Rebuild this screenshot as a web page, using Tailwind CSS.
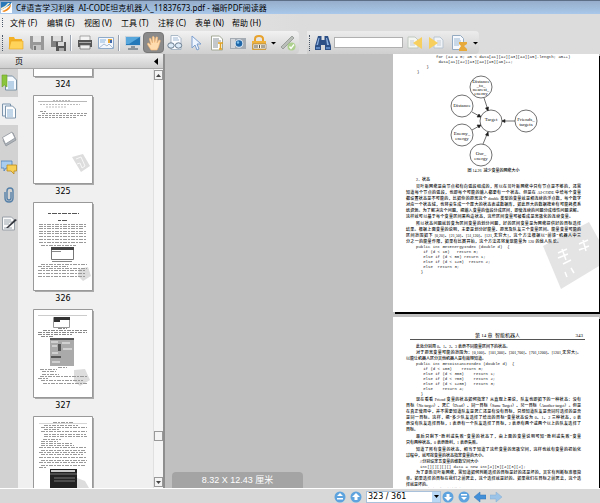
<!doctype html>
<html lang="zh-CN">
    <head>
        <meta charset="UTF-8" />
        <meta name="viewport" content="width=device-width, initial-scale=1.0" />
        <title>福昕PDF阅读器</title>
        <!-- Add Tailwind -->
        <script src="https://cdn.jsdelivr.net/npm/@tailwindcss/browser@4"></script>
    </head>
    <body class="h-screen flex flex-col overflow-hidden bg-[#dcdcdc] text-black text-[8px] font-['Noto_Sans','Noto_Sans_CJK_SC',sans-serif]">
        <!-- Title bar -->
        <header class="h-[14px] shrink-0 flex items-center gap-1 px-px border-t border-[#5d6f86] bg-linear-to-b from-[#96aecb] to-[#a9c8ea]">
            <svg class="w-[11px] h-[11px]" viewBox="0 0 11 11">
                <path d="M0 0h11v11H0z" fill="#fff"/>
                <path d="M0 0h11L9 3 0 8z" fill="#2a78b8"/>
                <path d="M1 9Q6 8 10 2Q10 8 3 10z" fill="#f08a1c"/>
                <path d="M0 8Q5 6 9 1L7 1Q4 5 0 6z" fill="#fff4d0"/>
            </svg>
            <h1 class="whitespace-pre leading-none">C#语言学习利器  AI-CODE坦克机器人_11837673.pdf - 福昕PDF阅读器</h1>
        </header>

        <!-- Menu -->
        <nav class="h-[17px] shrink-0 flex items-center pl-[2px] bg-linear-to-r from-[#f0f0f0] to-[#dcdcdc] to-50%">
            <span class="h-[9px] border-l border-dotted border-gray-600 mr-[7px]"></span>
            <div class="flex gap-[9px] leading-none [&>button]:w-7 [&>button]:whitespace-nowrap [&>button]:text-left">
                <button>文件 (F)</button>
                <button>编辑 (E)</button>
                <button>视图 (V)</button>
                <button>工具 (T)</button>
                <button>注释 (C)</button>
                <button>表单 (N)</button>
                <button>帮助 (H)</button>
            </div>
        </nav>

        <!-- Toolbars -->
        <div class="h-[23px] shrink-0 flex gap-2 [&_button]:shrink-0 [&_svg]:block [&_svg]:mx-auto">
            <div class="flex items-center pl-[2px] pr-px rounded-r bg-linear-to-b from-[#f2f2f2] to-[#cfcfcf]">
                <span class="h-4 border-l border-dotted border-gray-600 mr-[2px]"></span>
                <button class="w-[21px]" aria-label="打开">
                    <svg width="16" height="16" viewBox="0 0 16 16"><path d="M1 2h5l1 2h7v10H1z" fill="#f2b126"/><path d="M1 14L3 6h12v8z" fill="#ffd35a" stroke="#e8a21d" stroke-width=".6"/></svg>
                </button>
                <button class="w-[21px]" aria-label="保存">
                    <svg width="16" height="16" viewBox="0 0 16 16"><path d="M1 1h14v14H3l-2-2z" fill="#989898"/><path d="M4 1h8v6H4z" fill="#e2e2e2"/><path d="M4 10h8v5H4z" fill="#c4c4c4"/><path d="M5 11h2v4H5z" fill="#777"/></svg>
                </button>
                <button class="w-[21px]" aria-label="另存为">
                    <svg width="16" height="16" viewBox="0 0 16 16"><path d="M1 1h12v11H1z" fill="#808080"/><path d="M3 1h8v5H3z" fill="#ddd"/><path d="M6 7h10v9H6z" fill="#555"/><path d="M8 7h6v4H8z" fill="#d8d8d8"/><path d="M9 13h5v3H9z" fill="#aaa"/></svg>
                </button>
                <span class="w-px h-4 mx-[2px] bg-gray-50 border-l border-gray-400 box-content"></span>
                <button class="w-[21px]" aria-label="打印">
                    <svg width="16" height="16" viewBox="0 0 16 16"><path d="M3 1h10v5H3z" fill="#f4f4f4" stroke="#888" stroke-width=".7"/><path d="M1 5h14v7H1z" fill="#555"/><path d="M2 7h12v1H2z" fill="#aaa"/><path d="M3 10h10v4H3z" fill="#eee" stroke="#666" stroke-width=".7"/></svg>
                </button>
                <button class="w-[21px]" aria-label="邮件">
                    <svg width="16" height="16" viewBox="0 0 16 16"><path d="M.5 2.500h15v11H.5z" fill="#f4f8fc" stroke="#8fa9c8"/><path d="M2 5h6M2 7h5" stroke="#8ab4dc"/><path d="M10 4h4v4h-4z" fill="#e7a736"/><path d="M12 5h2v3h-2z" fill="#4168a8"/><path d="M1 13l5-4 3 2 2-2 4 4" fill="none" stroke="#a8bcd4"/></svg>
                </button>
                <span class="w-px h-4 mx-[2px] bg-gray-50 border-l border-gray-400 box-content"></span>
                <button class="w-[21px]" aria-label="全屏">
                    <svg width="16" height="16" viewBox="0 0 16 16"><path d="M0 1h16v10H0z" fill="#c9d3dc"/><path d="M1 2h14v8H1z" fill="#2579b8"/><path d="M1 2h14L4 9H1z" fill="#58a7dc"/><path d="M6 11h4v2h3v2H3v-2h3z" fill="#8d959c"/></svg>
                </button>
                <button class="w-[21px] h-[21px] rounded-sm bg-[#8a8a8a] border border-[#777]" aria-label="手形工具">
                    <svg width="16" height="16" viewBox="0 0 16 16"><path d="M5 15L1.500 9.500Q1 8 2.500 8L5 10 3.300 4Q3.500 2.600 4.800 3.500L6.500 8 6.300 2Q7.200.5 8.200 2L8.700 7.500 10 2.300Q11 1.300 11.700 2.500L11 8 13 5Q14.300 4.500 14.300 6L12.500 12 11 15z" fill="#ffdcae" stroke="#f3b673" stroke-width=".6"/></svg>
                </button>
                <button class="w-[21px]" aria-label="阅读">
                    <svg width="16" height="16" viewBox="0 0 16 16"><path d="M4 .5h7l3 3v11H4z" fill="#fafcff" stroke="#9ab" stroke-width=".8"/><path d="M6 3h5M6 5h6" stroke="#9fb8d2"/><ellipse cx="4" cy="10.500" rx="3.200" ry="2.700" fill="#dbeaf6" stroke="#6a7b8e"/><ellipse cx="11.500" cy="10.500" rx="3.200" ry="2.700" fill="#dbeaf6" stroke="#6a7b8e"/></svg>
                </button>
                <button class="w-[21px]" aria-label="选择">
                    <svg width="16" height="16" viewBox="0 0 16 16"><path d="M4 1v12l3-3 2 5 2-1-2-5h4z" fill="#eef5ff" stroke="#7d9fcd"/></svg>
                </button>
                <button class="w-[21px]" aria-label="选择文本">
                    <svg width="16" height="16" viewBox="0 0 16 16"><path d="M2.500 1h8l3 3v11h-11z" fill="#fff" stroke="#a2a894"/><path d="M4 4h6M4 6h8M4 8h5M4 10h5M4 12h5" stroke="#8a9094"/><path d="M9 8h5M11.500 8v6M10 14h3" stroke="#e0a020" stroke-width="1.500"/></svg>
                </button>
                <button class="w-[21px]" aria-label="快照">
                    <svg width="16" height="16" viewBox="0 0 16 16"><path d="M0 3h16v11H0z" fill="#a5abb3"/><path d="M1 4h4v9H1z" fill="#d3d7db"/><circle cx="9" cy="8.500" r="4.300" fill="#dfeaf4"/><circle cx="9" cy="8.500" r="3.300" fill="#1e66a8"/><circle cx="8" cy="7.500" r="1.200" fill="#7cc0ee"/></svg>
                </button>
                <button class="w-[21px]" aria-label="打字机">
                    <svg width="16" height="16" viewBox="0 0 16 16"><path d="M4 7V4q0-3 4-3t4 3v3" fill="none" stroke="#e6a22c" stroke-width="2"/><path d="M1 6h14v9H1z" fill="#f1b23a"/><path d="M2 9h13v5H2z" fill="#fff5dd" stroke="#80705a" stroke-width=".6"/><path d="M4 10v3M6 10v3M8.500 10v3M11 10v3M13 10v3" stroke="#555"/></svg>
                </button>
                <svg class="w-2" height="6" viewBox="0 0 8 6"><path d="M2 2h5L4.500 4.500z"/></svg>
                <button class="w-[21px]" aria-label="签名">
                    <svg width="16" height="16" viewBox="0 0 16 16"><path d="M1 12L12 1l2 2L3 14z" fill="#b9beb9" stroke="#858a85" stroke-width=".7"/><circle cx="11.500" cy="11.500" r="4" fill="#aed08e"/><path d="M9.500 11.500l1.500 2 3-4" fill="none" stroke="#fff" stroke-width="1.300"/></svg>
                </button>
            </div>

            <div class="flex items-center pl-[2px] rounded-r bg-linear-to-b from-[#ececec] to-[#cfcfcf]">
                <span class="h-4 border-l border-dotted border-gray-600 mr-[2px]"></span>
                <button class="w-[21px]" aria-label="查找">
                    <svg width="16" height="16" viewBox="0 0 16 16"><path d="M3 1h3.500v4h3V1H13l3 10v4h-6v-5H6v5H0v-4z" fill="#2c4f86"/><path d="M3.500 3h1L3 10H1.500zM11 3h1l2 7h-2z" fill="#8eb2e0"/><path d="M1 12h4v2H1zM11 12h4v2h-4z" fill="#5c86c0"/></svg>
                </button>
                <input type="text" aria-label="查找内容" class="w-[69px] h-[11px] mx-px bg-white border border-[#b0b0b0]">
                <button class="w-[21px]" aria-label="上一个">
                    <svg width="16" height="16" viewBox="0 0 16 16"><path d="M1 2h7l3 3v8H1z" fill="#f4f6f2" stroke="#c0c8c0"/><path d="M3 6h4M3 8h4M3 10h5" stroke="#c3cbd3"/><path d="M15 2v12L6 8z" fill="#f7cf5e"/></svg>
                </button>
                <button class="w-[21px]" aria-label="下一个">
                    <svg width="16" height="16" viewBox="0 0 16 16"><path d="M6 2h6l3 3v8H6z" fill="#f0f4f8" stroke="#b8c4d0"/><path d="M9 6h4M9 8h4M9 10h4" stroke="#c3cbd3"/><path d="M1 2v12l9-6z" fill="#f7cf5e"/></svg>
                </button>
                <button class="w-[25px]" aria-label="高级查找">
                    <svg width="16" height="16" viewBox="0 0 16 16"><path d="M1.500.5h8l3 3v11h-11z" fill="#f6faff" stroke="#94aac0"/><path d="M3 4h6M3 6h7M3 8h6M3 10h5" stroke="#9bb6d0"/><path d="M8 7h8v2l-3 2 3 3v2H8v-2l2-3-2-2z" fill="#e7a93a"/></svg>
                </button>
                <svg class="w-2" height="6" viewBox="0 0 8 6"><path d="M2 2h5L4.500 4.500z"/></svg>
            </div>
        </div>

        <main class="flex-1 min-h-0 flex">
            <!-- Page thumbnails -->
            <aside class="w-[165px] shrink-0 flex flex-col border-r-2 border-[#8e8e8e] bg-[#f0f0f0]">
                <div class="h-[15px] shrink-0 flex items-center justify-between pl-[15px] pr-1 border-b border-[#a8a8a8] bg-linear-to-b from-[#eee] to-[#cdcdcd]">
                    <h2 class="leading-none">页</h2>
                    <button aria-label="隐藏面板"><svg class="w-[5px] h-[7px]" viewBox="0 0 5 7"><path d="M4 0v7L0 3.500z"/></svg></button>
                </div>
                <div class="flex-1 min-h-0 flex">
                    <div class="w-[18px] shrink-0 flex flex-col bg-[#d2d2d2] [&>button]:h-7 [&_svg]:block [&_svg]:mx-auto">
                        <button aria-label="书签">
                            <svg width="16" height="18" viewBox="0 0 16 18"><path d="M4.500 2h7l4 4v10h-11z" fill="#f4faff" stroke="#7890a4"/><path d="M7 8h6M7 10h6M7 12h6M7 14h6" stroke="#7ea9cf"/><path d="M1 1h5v12l-2.500-2L1 13z" fill="#8bc53d" stroke="#6ba326" stroke-width=".6"/></svg>
                        </button>
                        <button class="bg-[#f0f0f0]" aria-label="页面">
                            <svg width="16" height="18" viewBox="0 0 16 18"><path d="M1.500 2h8v12h-8z" fill="#eef4fa" stroke="#7d95ab"/><path d="M4.500 4h7l3 3v9h-10z" fill="#fff" stroke="#7d95ab"/><path d="M6 8h6M6 10h6M6 12h6M6 14h6" stroke="#86aed3"/></svg>
                        </button>
                        <button aria-label="图层">
                            <svg width="16" height="18" viewBox="0 0 16 18"><path d="M2 10L12 3l3 7L5 16z" fill="#aeb4ba" stroke="#858c94" stroke-width=".7"/><path d="M1.500 7.500L11 2l3 6-9.500 6z" fill="#fff" stroke="#8b9299" stroke-width=".8"/></svg>
                        </button>
                        <button aria-label="注释">
                            <svg width="16" height="18" viewBox="0 0 16 18"><path d="M0 3h11v7H5l-2 3v-3H0z" fill="#a9cdef" stroke="#4e82b8" stroke-width=".8"/><path d="M6 7h9.500v6H13v3l-3-3H6z" fill="#f8cf55" stroke="#b98a1c" stroke-width=".8"/></svg>
                        </button>
                        <button aria-label="附件">
                            <svg width="16" height="18" viewBox="0 0 16 18"><path d="M4 6v6q0 4 4 4t4-4V5q0-3-3-3T6 5v7q0 2 2 2t2-2V6" fill="none" stroke="#5680a8" stroke-width="1.400"/></svg>
                        </button>
                        <button aria-label="签名面板">
                            <svg width="16" height="18" viewBox="0 0 16 18"><path d="M1.500 3h9l3 3v10h-12z" fill="#fafafa" stroke="#98a0a8"/><path d="M3 6h7M3 8h8M3 10h5M3 14h8" stroke="#9ba5ae"/><path d="M5 14L14 5l2 1-9 8z" fill="#34383e"/></svg>
                        </button>
                    </div>

                    <ol class="flex-1 flex flex-col overflow-hidden items-center text-center text-[8px] [&>li]:w-[90px] [&>li]:h-[107px] [&>li]:shrink-0 [&>li]:mr-[45px] [&_svg]:w-[61px] [&_svg]:h-[90px] [&_svg]:mx-auto [&_p]:h-[17px] [&_p]:leading-[13px] [&_p]:font-['DejaVu_Sans']">
                        <!-- scrolled so that page 324 is nearly out of view -->
                        <li class="-mt-[81px]">
                            <svg viewBox="0 0 61 90"><path d="M2 2h59v88H2z" fill="#aaa"/><path d="M.5.5h59v88H.5z" fill="#fff" stroke="#999"/></svg>
                            <p>324</p>
                        </li>
                        <li>
                            <svg viewBox="0 0 61 90"><path d="M2 2h59v88H2z" fill="#aaa"/><path d="M.5.5h59v88H.5z" fill="#fff" stroke="#999"/>
                                <path d="M5 6.500h49" stroke="#888" stroke-width=".6"/><path d="M20 5.500h18M7 9.500h40M13 12h20" stroke="#bbb" stroke-dasharray="2 1"/>
                                <path d="M7 16.500h7M9 18.500h45M5 20.500h48M5 22.500h38" stroke="#999" stroke-dasharray="3 1 2 1"/>
                                <path d="M39 62l11-3 7 12-9 6z" fill="#ddd"/><path d="M43 64l5-2 4 9-3 2-2-5-3 1" fill="none" stroke="#f8f8f8"/>
                            </svg>
                            <p>325</p>
                        </li>
                        <li>
                            <svg viewBox="0 0 61 90"><path d="M2 2h59v88H2z" fill="#aaa"/><path d="M.5.5h59v88H.5z" fill="#fff" stroke="#999"/>
                                <path d="M15 11.500h31M25 18.500h10" stroke="#555" stroke-dasharray="3 1 5 1"/>
                                <path d="M6 22.500h48M6 24.500h48M6 26.500h45M6 29.500h48M6 31.500h48M6 34.500h48M6 37.500h48M6 40.500h48M8 43.500h35" stroke="#999" stroke-dasharray="4 1 2 1"/>
                                <path d="M18.500 45.500h22v12h-22z" fill="#fff" stroke="#777"/><path d="M18 45h23v3H18z" fill="#444"/><path d="M19 49.500h9M19 59.500h20" stroke="#888"/>
                                <path d="M46 67l9-2 3 9-8 5-5-5z" fill="#ddd"/>
                                <path d="M8 62.500h46M5 64.500h30M8 66.500h46M5 68.500h48M5 71.500h48M5 74.500h48" stroke="#999" stroke-dasharray="4 1 2 1"/>
                            </svg>
                            <p>326</p>
                        </li>
                        <li>
                            <svg viewBox="0 0 61 90"><path d="M2 2h59v88H2z" fill="#aaa"/><path d="M.5.5h59v88H.5z" fill="#fff" stroke="#999"/>
                                <path d="M5 6.500h49" stroke="#aaa" stroke-width=".6"/><path d="M20.500 8.500h16v10h-16z" fill="#fff" stroke="#999"/><path d="M21 8h16v3H27v2h-6z" fill="#333"/>
                                <path d="M25 19.500h9M10 21.500h44M5 23.500h49M5 25.500h34M8 27.500h12" stroke="#888" stroke-dasharray="4 1 2 1"/>
                                <path d="M17 29h24v28H17z" fill="#aaa"/><path d="M17 29h24v2H17zM18 47h10v2H18zM25 35h3v7h-3z" fill="#555"/><path d="M18 33h7M29 34h8M19 37h5M30 40h9M19 44h6M19 53h8" stroke="#ddd" stroke-width="1.500"/>
                                <path d="M41 61l11-1 5 11-10 6-6-5z" fill="#ddd"/>
                                <path d="M25 58.500h9M7 60.500h17M9 62.500h14M9 65.500h17M7 67.500h47M5 69.500h10M8 71.500h42M10 74.500h44" stroke="#999" stroke-dasharray="4 1 2 1"/>
                            </svg>
                            <p>327</p>
                        </li>
                        <li>
                            <svg viewBox="0 0 61 90"><path d="M2 2h59v88H2z" fill="#aaa"/><path d="M.5.5h59v88H.5z" fill="#fff" stroke="#999"/>
                                <path d="M6 7.500h48" stroke="#bbb" stroke-width=".6"/>
                                <path d="M20 6.500h20M11 9.500h34M8 11.500h46M11 13.500h16M8 15.500h46M11 18.500h42M11 20.500h43M10 23.500h18M8 25.500h17M8 27.500h32M8 29.500h33M6 31.500h48M8 34.500h45M6 36.500h48M8 38.500h42M6 41.500h48M8 44.500h46M6 46.500h48M8 49.500h45M6 51.500h7" stroke="#999" stroke-dasharray="4 1 2 1"/>
                                <path d="M17 53h27v37H17z" fill="#222"/><path d="M18 54h24v2H18z" fill="#ccc"/><path d="M17 58h27M21 62h21M21 65h21" stroke="#777"/><path d="M44 62l8 3 4 7-5 6-7 2z" fill="#ddd"/>
                            </svg>
                        </li>
                    </ol>

                    <!-- Scrollbar -->
                    <div class="w-[10px] shrink-0 flex flex-col items-center py-px border-l border-[#e0e0e0] bg-[#f5f5f5] [&>button]:w-[9px] [&>button]:h-[10px] [&>button]:border [&>button]:border-[#999] [&>button]:bg-[#f4f4f4] [&_svg]:mx-auto">
                        <button aria-label="向上滚动"><svg width="5" height="3" viewBox="0 0 5 3"><path d="M0 3h5L2.500 0z" fill="#444"/></svg></button>
                        <span class="flex-1"></span>
                        <button aria-label="滚动块"></button>
                        <span class="h-9"></span>
                        <button aria-label="向下滚动"><svg width="5" height="3" viewBox="0 0 5 3"><path d="M0 0h5L2.500 3z" fill="#444"/></svg></button>
                    </div>
                </div>
            </aside>

            <!-- Document -->
            <section class="flex-1 min-w-0 relative flex flex-col items-end overflow-hidden bg-[#c0c0c0] text-[4px] text-black leading-[6px] font-['Liberation_Serif','Noto_Sans_CJK_SC',serif] [&_p]:whitespace-nowrap [&_p]:font-medium [&_pre]:font-['Liberation_Mono',monospace] [&_pre]:leading-[5px] [&_pre]:text-[#222] [&_.full]:[text-align-last:justify]">
                <article class="w-[206px] h-[258px] shrink-0 relative mr-px pl-[13px] pr-[18px] pt-px bg-white shadow-[2px_2px_0_#000]">
                    <svg class="absolute right-0 bottom-[22px] w-[56px] h-[68px]" viewBox="0 0 56 68">
                        <path d="M0 24L46 0l10 18v26L18 67z" fill="#e4e4e4"/>
                        <path d="M15 31l9-4M19 27l4 11M15 36l10-4M20 42l8-4M36 22l9-4M40 18l3 11M36 28l10-4M22 50l2 5M28 46l3 5" fill="none" stroke="#fff" stroke-width="1.500"/>
                    </svg>
                    <pre class="relative pl-[30px]">for (a4 = 0; a5 &lt; data[a1][a2][a3][a4][a5].length; a5++)
 data[a1][a2][a3][a4][a5][a6]++;</pre>
                    <pre class="pl-[11px]">    }
}</pre>
                    <svg class="block w-[180px] h-[92px]" viewBox="0 0 180 92" fill="none" stroke="#333" stroke-width=".7">
                        <circle cx="75" cy="12" r="11"/><circle cx="56" cy="31" r="11"/><circle cx="56" cy="60" r="11"/><circle cx="75" cy="80" r="11"/><circle cx="85" cy="46" r="11"/><circle cx="120" cy="46" r="11"/>
                        <path d="M78 23l4 12M66 37l9 5M66 55l9-5M77 69l5-12M109 46H96"/>
                        <path d="M82 36l-2.500-3 3-1zM75 42l-4 0 2-3zM75 50l-4 0 2 3zM82 57l-2.500 3 3 1zM96 46l3-1.500v3z" fill="#111"/>
                        <g fill="#111" stroke="none" font-size="5" text-anchor="middle">
                            <text x="75" y="8">Distance</text><text x="75" y="12">_to_</text><text x="75" y="16">nearest_</text><text x="75" y="20">enemy</text>
                            <text x="56" y="32">Distance</text><text x="85" y="46">Target</text>
                            <text x="56" y="60">Enemy_</text><text x="56" y="65">energy</text>
                            <text x="75" y="80">Our_</text><text x="75" y="85">energy</text>
                            <text x="120" y="46">Friends_</text><text x="120" y="51">targets</text>
                        </g>
                    </svg>
                    <p class="text-center mt-px">图 14.26&nbsp; 减少变量的网络大小</p>
                    <div class="relative mt-[3px]">
                        <p class="pl-[10px] mb-px">2．状态</p>
                        <p class="full pl-[10px]">贝叶斯网络是由节点和有向弧段组成的，所以在贝叶斯网络中只有节点是不够的，还需</p>
                        <p class="full">知道每个节点的弧段，也即每个可能的输入都要有一个状态。但是在 AI-CODE 中给每个变量</p>
                        <p class="full">都设置状态是不可能的，比如你的距离这个 double 类型的变量就是相连续的浮点数，每个数字</p>
                        <p class="full">对应一个状态域，也将会生成一个庞大的状态表或数据库，如此巨大的数据搜索有可能耗费系</p>
                        <p class="full">统资源。为了解决这个问题，把输入变量的值段分成区间，即使连续的问题分成线性问题求解。</p>
                        <p class="full pr-2">这样就可以基于每个变量区间来构造状态，这些区间变量可被看成是离散化的连续变量。</p>
                        <p class="full pl-[10px] mt-px">所以状态问题就转变为区间变量的划分问题，好的区间变量是为网络提供好的目标选择</p>
                        <p class="full">结果。根据上面变量的说明，主要是划分好能量、距离及队友三个变量区间。能量变量可能的</p>
                        <p class="full">区间范围如下 [0,20]、[21,50]、[51,120]、[121,无穷大]，这个方法根据以“前锋”机器人中三</p>
                        <p class="full pr-5">分之一的能量作限，如果有比赛开始，这个方法还将发现能量为 120 的敌人队长。</p>
                        <pre class="pl-[10px]">public int GetEnergyIndex (double d)  {
   if (d &lt; 10)   return 0;
   else if (d &lt; 50) return 1;
   else if (d &lt; 120)  return 2;
   else  return 3;
  }</pre>
                    </div>
                </article>

                <article class="w-[206px] shrink-0 mt-[5px] mr-px pl-[13px] pr-[18px] pt-[16px] bg-white shadow-[2px_2px_0_#000]">
                    <header class="grid grid-cols-3 ml-1 -mr-1 mb-1 px-[2px] border-b border-[#555] text-[5px]">
                        <span></span>
                        <h3 class="text-center whitespace-nowrap">第 14 章&nbsp; 智能机器人</h3>
                        <span class="text-right">343</span>
                    </header>
                    <p class="pl-[10px]">此处分别用 0、1、2、3 表示不同能量区间下的状态。</p>
                    <p class="full pl-[10px]">对于距离变量可能的范围为：[0,100]、[101,300]、[301,700]、[701,1200]、[1201,无穷大]。</p>
                    <p>以能让机器人区分其他机器人是有效得知道。</p>
                    <pre class="pl-[10px]">public int GetDistanceIndex (double d)  {
   if (d &lt; 100)    return 0;
   else if (d &lt; 300)    return 1;
   else if (d &lt; 700)    return 2;
   else if (d &lt; 1200)   return 3;
   else    return 4;
  }</pre>
                    <p class="full pl-[10px]">现在看看 Friend 变量的状态如何指定？从直观上来说，队友也即如下的一种状态：没有</p>
                    <p class="full">目标（No target）、死亡（Dead）、同一目标（Same Target）、另一目标（Another target）。但是</p>
                    <p class="full">在真正使用中，并不需要知道队友是死亡还是有没有目标，只想知道队友是否同时选择的是否</p>
                    <p class="full">是同一目标。这样，把“多少队友选择了给出的目标”变量状态设为 0、1、2 三种状态，0 表</p>
                    <p class="full">示没有队友选择目标，1 表示有一个队友选择了目标，2 表示有两个或两个以上的队友选择了</p>
                    <p>目标。</p>
                    <p class="full pl-[10px] mt-px">最后只剩下“胜利或失败”变量的状态了，由上面的变量说明可知“胜利或失败”变量</p>
                    <p>只有两种状态，0 表示胜利，1 表示失败。</p>
                    <p class="full pl-[10px] mt-px">知道了所有变量的状态，相当于知道了这些变量的离散空间，这样也就有变量的初始化</p>
                    <p>过程中，就可按变量的状态指定变量的大小。</p>
                    <p class="pl-[14px]">//分别设定五变量的维数空间大小</p>
                    <pre class="pl-[14px]">int[][][][][] data = new int[4][5][4][3][2];</pre>
                    <p class="full pl-[10px]">为了更新贝叶斯网络，需知道如何判断选择的目标是好的还是坏的，其实有判断标准很简</p>
                    <p class="full">单。如果选择的目标在我们之前死去，这个选择就是好的。如果我们在目标之前死去，这个选</p>
                    <p>择就是坏的。</p>
                    <p class="pl-[10px]">3．贝叶斯公式与方法的应用</p>
                </article>

                <!-- Page size hint -->
                <div class="absolute left-[7px] bottom-0 w-[131px] h-4 flex items-center justify-center rounded-t bg-[#a4a4a4] text-white text-[9px] font-['Liberation_Sans','Noto_Sans_CJK_SC',sans-serif]">8.32 X 12.43 厘米</div>
            </section>
        </main>

        <!-- Status bar -->
        <footer class="h-[15px] shrink-0 flex items-center justify-end gap-1 pr-[98px] pt-px border-t border-white bg-[#d8d8d8]">
            <button aria-label="第一页"><svg class="w-3 h-3" viewBox="0 0 12 12"><circle cx="6" cy="6" r="5.500" fill="#5fa3de"/><path d="M3 5l3-3 3 3zM3 7h6v1.500H3z" fill="#fff"/></svg></button>
            <button aria-label="上一页"><svg class="w-3 h-3" viewBox="0 0 12 12"><circle cx="6" cy="6" r="5.500" fill="#5fa3de"/><path d="M6 2l4 4H7.500v3h-3V6H2z" fill="#fff"/></svg></button>
            <div class="w-[75px] h-3 flex border border-[#a9c1da] bg-white -mr-[3px]">
                <input type="text" aria-label="页码" value="323 / 361" class="flex-1 min-w-0 px-px text-[8px] leading-[10px] font-['DejaVu_Sans']">
                <button class="w-2 bg-[#b8d8f5]" aria-label="选择页码"><svg class="mx-auto" width="5" height="3" viewBox="0 0 5 3"><path d="M0 0h5L2.500 3z"/></svg></button>
            </div>
            <button aria-label="下一页"><svg class="w-3 h-3" viewBox="0 0 12 12"><circle cx="6" cy="6" r="5.500" fill="#5fa3de"/><path d="M6 10L2 6h2.500V3h3v3H10z" fill="#fff"/></svg></button>
            <button aria-label="最后一页"><svg class="w-3 h-3" viewBox="0 0 12 12"><circle cx="6" cy="6" r="5.500" fill="#5fa3de"/><path d="M3 6l3 3 3-3zM3 3h6v1.500H3z" fill="#fff"/></svg></button>
            <button aria-label="后退"><svg class="w-3 h-3" viewBox="0 0 12 12"><path d="M0 6l6-5v3h6v4H6v3z" fill="#4490d8" stroke="#2f72b4" stroke-width=".5"/></svg></button>
            <button aria-label="前进"><svg class="w-3 h-3" viewBox="0 0 12 12"><path d="M12 6L6 1v3H0v4h6v3z" fill="#9cc4e8" stroke="#84acd0" stroke-width=".5"/></svg></button>
        </footer>
    </body>
</html>
